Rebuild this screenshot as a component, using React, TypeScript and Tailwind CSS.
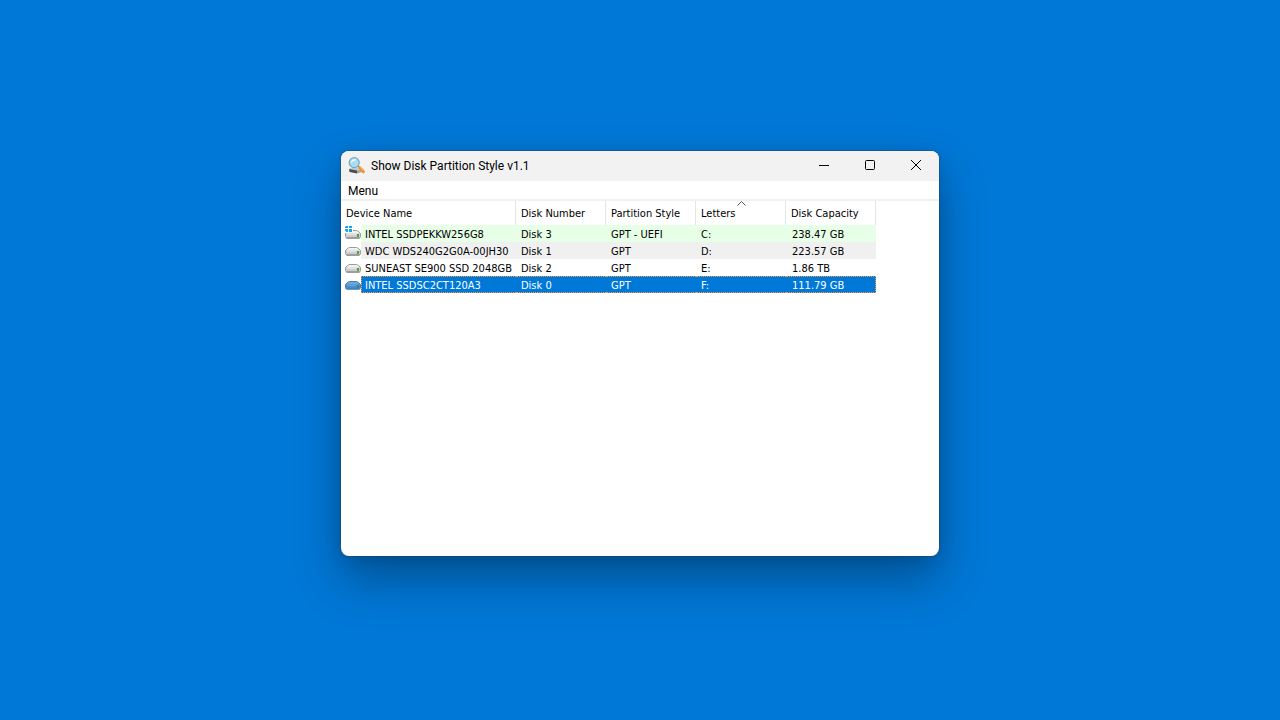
import { useState } from "react";

type Disk = {
  name: string;
  number: string;
  style: string;
  letters: string;
  capacity: string;
  system?: boolean;
};

const disks: Disk[] = [
  { name: "INTEL SSDPEKKW256G8", number: "Disk 3", style: "GPT - UEFI", letters: "C:", capacity: "238.47 GB", system: true },
  { name: "WDC WDS240G2G0A-00JH30", number: "Disk 1", style: "GPT", letters: "D:", capacity: "223.57 GB" },
  { name: "SUNEAST SE900 SSD 2048GB", number: "Disk 2", style: "GPT", letters: "E:", capacity: "1.86 TB" },
  { name: "INTEL SSDSC2CT120A3", number: "Disk 0", style: "GPT", letters: "F:", capacity: "111.79 GB" },
];

const columns = ["Device Name", "Disk Number", "Partition Style", "Letters", "Disk Capacity"];

function AppIcon() {
  return (
    <svg viewBox="0 0 18 18" className="size-[18px] shrink-0" aria-hidden="true">
      <path d="M2 11 L10 10.5 L16 12 L9 14 L1.5 13 Z" fill="#c6c9cc" />
      <path d="M1 12 L9 13.5 L9 16.5 L1.5 15 Z" fill="#4a4c4e" />
      <path d="M9 13.5 L15.5 12.5 L15.5 14.5 L9 16.5 Z" fill="#a4a6a8" />
      <path d="M10 9 L12 11" stroke="#8c8c8c" strokeWidth="1.6" />
      <path d="M11.8 10.8 L15.4 14.6" stroke="#f2932a" strokeWidth="3" strokeLinecap="round" />
      <path d="M12.3 10.2 L16 13.8" stroke="#ffc27a" strokeWidth="0.8" />
      <circle cx="6.2" cy="5.6" r="5" fill="#a9dcf5" stroke="#7fa5bb" strokeWidth="1.2" />
      <path d="M2.8 6 A3.6 3.6 0 0 1 8.7 2.8 C6.5 3.8 4.6 5 2.8 6 Z" fill="#e4f6fe" />
    </svg>
  );
}

function DriveIcon({ selected, system }: { selected: boolean; system?: boolean }) {
  return (
    <svg viewBox="0 0 16 16" className="block size-4" aria-hidden="true">
      <path
        d="M0.5 8 Q0.7 6.8 2 6 L3.4 4.9 Q4.2 4.5 5 4.5 H11 Q11.8 4.5 12.6 4.9 L14 6 Q15.3 6.8 15.5 8 V10.5 Q15.5 12 14 12 H2 Q0.5 12 0.5 10.5 Z"
        fill={selected ? "#6fa8da" : "#f2f2f2"}
        stroke={selected ? "#3f7eb6" : "#9b9b9b"}
      />
      <path d="M1 7.5 H15 V10.5 Q15 11.5 14 11.5 H2 Q1 11.5 1 10.5 Z" fill={selected ? "#4a8dc8" : "#cdcdcd"} />
      <path d="M2 8.5 H11" stroke={selected ? "#66a3d8" : "#e4e4e4"} />
      <path d="M1.5 12 H14.5" stroke={selected ? "#3474ab" : "#6f6d71"} />
      <rect x="12" y="8" width="2" height="3" fill={selected ? "#258a91" : "#3fae35"} />
      {system && (
        <g>
          <path d="M0 0 H8 V5 H4 V7 H0 Z" fill="#fff" />
          <path d="M1 0 H3 V2 H0 V1 Z M4 0 H7 V2 H4 Z M0 3 H3 V6 H1 V5 H0 Z M4 3 H7 V6 H4 Z" fill="#18a5ee" />
        </g>
      )}
    </svg>
  );
}

function rowColors(index: number, selected: boolean) {
  if (selected) return "bg-[#0078d7] text-white border-y border-dotted border-[#ff9b3d]";
  if (index === 0) return "bg-[#e6ffe6] text-black";
  if (index === 1) return "bg-[#f0f0f0] text-black";
  return "bg-white text-black";
}

export default function App() {
  const [current, setCurrent] = useState(3);
  const captionButton = "flex h-full w-[46px] items-center justify-center pb-0.5";

  return (
    <div className="flex min-h-screen items-center justify-center bg-[#0078d7] pb-[13px]">
      <main className="flex min-h-[405px] w-full max-w-[598px] flex-col overflow-hidden rounded-lg bg-white text-black shadow-[0_0_0_1px_rgba(40,60,80,0.35),0_24px_48px_rgba(0,0,0,0.32),0_2px_16px_rgba(0,0,0,0.12)]">
        <header className="flex h-[30px] items-center bg-[#f2f2f2] pl-[7px]">
          <AppIcon />
          <h1 className="flex-1 pl-[5px] font-['Roboto','Open_Sans',sans-serif] text-[12px] leading-4">
            Show Disk Partition Style v1.1
          </h1>
          <button type="button" aria-label="Minimize" className={captionButton}>
            <svg viewBox="0 0 12 12" className="size-3" fill="none" stroke="#000">
              <path d="M1 6.5 H11" />
            </svg>
          </button>
          <button type="button" aria-label="Maximize" className={captionButton}>
            <svg viewBox="0 0 12 12" className="size-3" fill="none" stroke="#000">
              <rect x="1.5" y="1.5" width="9" height="9" rx="1" />
            </svg>
          </button>
          <button type="button" aria-label="Close" className={captionButton}>
            <svg viewBox="0 0 12 12" className="size-3" fill="none" stroke="#000">
              <path d="M1 1 L11 11 M11 1 L1 11" />
            </svg>
          </button>
        </header>

        <nav className="flex h-5 border-b-2 border-[#f0f0f0] pl-[7px]">
          <button type="button" className="font-['Roboto','Open_Sans',sans-serif] text-[12px] leading-5">
            Menu
          </button>
        </nav>

        <table className="w-[535px] table-fixed border-collapse font-['DejaVu_Sans_Condensed','DejaVu_Sans',sans-serif] text-[11px] leading-[15px]">
          <colgroup>
            <col className="w-[175px]" />
            <col className="w-[90px]" />
            <col className="w-[90px]" />
            <col className="w-[90px]" />
            <col className="w-[90px]" />
          </colgroup>
          <thead>
            <tr>
              {columns.map((title) => (
                <th
                  key={title}
                  scope="col"
                  aria-sort={title === "Letters" ? "ascending" : undefined}
                  className="p-0 text-left font-normal"
                >
                  <div className="relative flex h-6 items-center border-r border-[#e5e5e5] pl-[5px] whitespace-nowrap">
                    {title}
                    {title === "Letters" && (
                      <svg viewBox="0 0 9 5" className="absolute top-0 left-[41px] h-[5px] w-[9px]" fill="none" stroke="#555" aria-hidden="true">
                        <path d="M0.5 4.5 L4.5 0.5 L8.5 4.5" />
                      </svg>
                    )}
                  </div>
                </th>
              ))}
            </tr>
          </thead>
          <tbody>
            {disks.map((disk, index) => {
              const selected = index === current;
              const cell =
                "flex h-[17px] items-center whitespace-nowrap " + (selected ? "pt-px " : "pt-0.5 ") + rowColors(index, selected);
              return (
                <tr key={disk.number} aria-selected={selected} onClick={() => setCurrent(index)}>
                  <td className="p-0">
                    <div className="flex h-[17px] items-center">
                      <span className="w-5 shrink-0 pl-1">
                        <DriveIcon selected={selected} system={disk.system} />
                      </span>
                      <div className={cell + " flex-1" + (selected ? " border-l pl-[3px]" : " pl-1")}>{disk.name}</div>
                    </div>
                  </td>
                  <td className="p-0">
                    <div className={cell + " pl-[5px]"}>{disk.number}</div>
                  </td>
                  <td className="p-0">
                    <div className={cell + " pl-[5px]"}>{disk.style}</div>
                  </td>
                  <td className="p-0">
                    <div className={cell + " pl-[5px]"}>{disk.letters}</div>
                  </td>
                  <td className="p-0">
                    <div className={cell + " pl-1.5" + (selected ? " border-r" : "")}>{disk.capacity}</div>
                  </td>
                </tr>
              );
            })}
          </tbody>
        </table>
      </main>
    </div>
  );
}
